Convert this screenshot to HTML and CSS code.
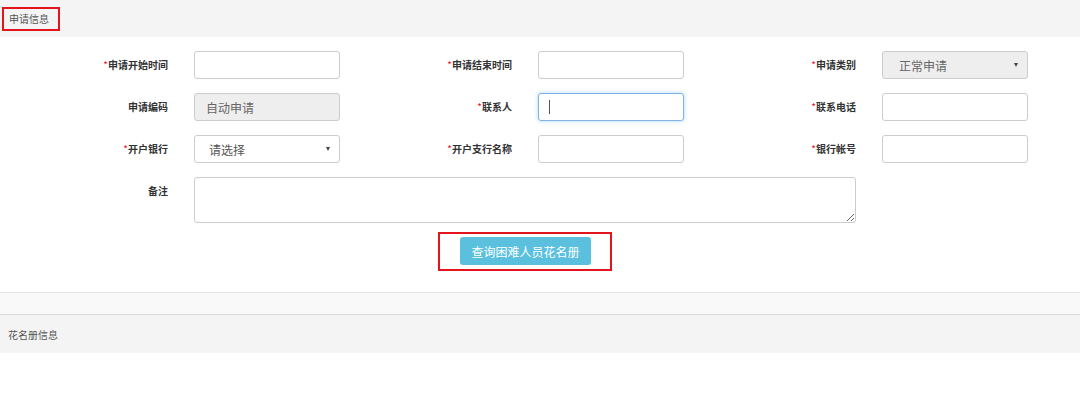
FILE: index.html
```html
<!DOCTYPE html>
<html lang="zh-CN">
<head>
    <meta charset="UTF-8">
    <title>申请信息</title>
    <link rel="stylesheet" href="styles.css">
</head>
<body>
    <div class="bloque-titulo">
        <span class="marca">申请信息</span>
    </div>

    <form class="formulario">
        <label class="etiqueta"><i>*</i>申请开始时间</label>
        <input class="campo" type="text">
        <label class="etiqueta"><i>*</i>申请结束时间</label>
        <input class="campo" type="text">
        <label class="etiqueta"><i>*</i>申请类别</label>
        <div class="selector deshabilitado">
            <select class="campo" disabled>
                <option>正常申请</option>
            </select>
            <span class="flecha"></span>
        </div>

        <label class="etiqueta">申请编码</label>
        <input class="campo" type="text" value="自动申请" disabled>
        <label class="etiqueta"><i>*</i>联系人</label>
        <div class="enfocado">
            <input class="campo activo" type="text">
            <span class="cursor"></span>
        </div>
        <label class="etiqueta"><i>*</i>联系电话</label>
        <input class="campo" type="text">

        <label class="etiqueta"><i>*</i>开户银行</label>
        <div class="selector">
            <select class="campo">
                <option>请选择</option>
            </select>
            <span class="flecha"></span>
        </div>
        <label class="etiqueta"><i>*</i>开户支行名称</label>
        <input class="campo" type="text">
        <label class="etiqueta"><i>*</i>银行帐号</label>
        <input class="campo" type="text">

        <label class="etiqueta">备注</label>
        <textarea class="campo notas"></textarea>

        <div class="acciones">
            <span class="marca marca-boton">
                <button class="boton" type="button">查询困难人员花名册</button>
            </span>
        </div>
    </form>

    <div class="separador"></div>

    <div class="bloque-titulo segundo">
        <span class="texto">花名册信息</span>
    </div>
</body>
</html>
```

FILE: styles.css
```css
body {
    margin: 0;
    background: #fff;
    font-family: "Noto Sans CJK SC", "Noto Sans", sans-serif;
    color: #333;
}

.bloque-titulo {
    height: 37px;
    background: #f4f4f4;
    display: flex;
    align-items: center;
    padding-left: 2px;
    font-size: 10px;
    color: #555;
}

.marca {
    border: 2px solid #e3141b;
    padding: 2px 9px 2px 5px;
    line-height: 16px;
    margin-top: 1px;
}

.formulario {
    display: grid;
    grid-template-columns: 168px 146px 146px 146px 146px 146px;
    column-gap: 26px;
    row-gap: 14px;
    padding-top: 14px;
}

.etiqueta {
    text-align: right;
    font-size: 10px;
    font-weight: bold;
    color: #333;
    padding-top: 7px;
    line-height: 14px;
}

.etiqueta i {
    font-style: normal;
    font-weight: normal;
    color: #e3141b;
}

.campo {
    box-sizing: border-box;
    width: 146px;
    height: 28px;
    margin: 0;
    border: 1px solid #ccc;
    border-radius: 3px;
    background: #fff;
    padding: 0 11px;
    font-family: inherit;
    font-size: 12px;
    color: #555;
    outline: none;
}

.campo:disabled {
    background: #eee;
    color: #666;
    opacity: 1;
}

.selector {
    position: relative;
}

.selector select {
    appearance: none;
    -webkit-appearance: none;
    padding-left: 14px;
}

.deshabilitado select {
    padding-left: 16px;
    color: #555;
}

.flecha {
    position: absolute;
    right: 10px;
    top: 12px;
    width: 0;
    height: 0;
    border-left: 2.5px solid transparent;
    border-right: 2.5px solid transparent;
    border-top: 4px solid #444;
    pointer-events: none;
}

.enfocado {
    position: relative;
}

.campo.activo {
    border-color: #7db3e8;
    box-shadow: 0 0 4px rgba(102, 175, 233, 0.5);
}

.cursor {
    position: absolute;
    left: 11px;
    top: 7px;
    width: 1px;
    height: 14px;
    background: #555;
}

.notas {
    grid-column: 2 / 6;
    width: 100%;
    height: 46px;
    resize: vertical;
    padding: 6px 11px;
}

.acciones {
    grid-column: 2 / 6;
    display: flex;
    justify-content: center;
    margin-top: -5px;
}

.marca-boton {
    display: inline-block;
    padding: 3px 19px 4px 20px;
    line-height: 0;
    margin-top: 0;
}

.boton {
    width: 131px;
    height: 28px;
    border: none;
    border-radius: 3px;
    background: #5bc0de;
    color: #fff;
    font-family: inherit;
    font-size: 12px;
    cursor: pointer;
}

.separador {
    margin-top: 21px;
    height: 21px;
    background: #f9f9f9;
    border-top: 1px solid #e3e3e3;
    border-bottom: 1px solid #dadada;
}

.segundo {
    height: 38px;
    padding-left: 8px;
}
```
